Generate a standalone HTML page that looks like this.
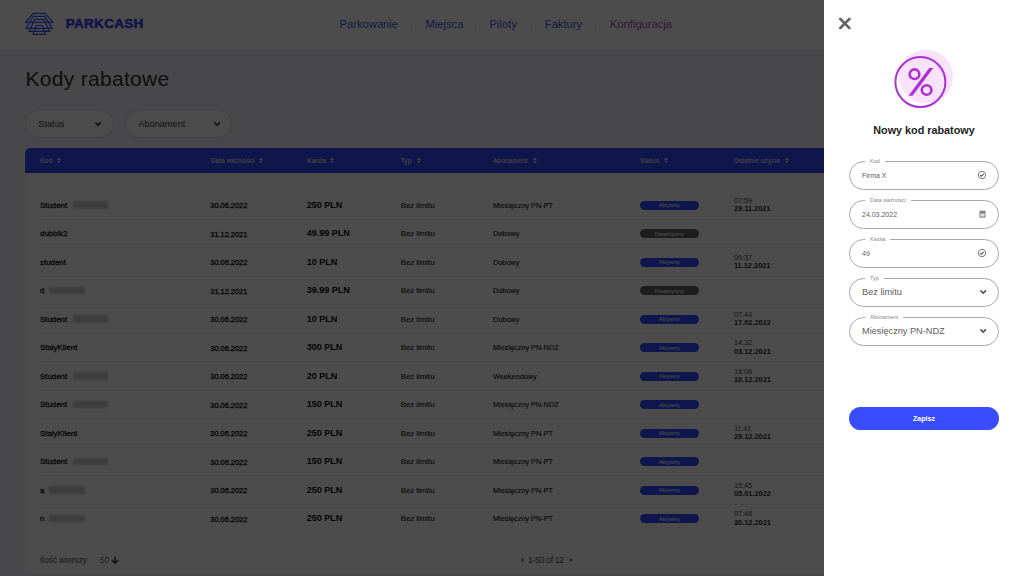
<!DOCTYPE html>
<html><head><meta charset="utf-8">
<style>
*{margin:0;padding:0;box-sizing:border-box}
html,body{width:1024px;height:576px;overflow:hidden}
body{position:relative;background:#f0eff5;font-family:"Liberation Sans",sans-serif;color:#333}
.a{position:absolute;white-space:nowrap}
.b{position:absolute}
svg{position:absolute;overflow:visible}
</style></head><body>
<div class="b" style="left:0;top:0;width:1024px;height:50px;background:#fff"></div>
<svg style="left:0;top:0" width="60" height="40" viewBox="0 0 60 40">
<g fill="none" stroke="#3a50f0" stroke-width="1.2" stroke-linejoin="miter">
<path d="M33.3 13.3 H45 L52.8 22.3 H25.6 Z"/>
<path d="M33.3 16.3 H44.7 L52.2 28.3 H26.1 Z"/>
<path d="M34.7 19.4 H43.9 L49.4 31.3 H29.2 Z"/>
<path d="M36.4 25.5 H42.2 L45.6 34.4 H33 Z"/>
</g></svg>
<div class="a" style="left:65.80px;top:17.26px;font-size:13.4px;line-height:13.4px;font-weight:bold;color:#3048f0;letter-spacing:0.35px;-webkit-text-stroke:0.55px #3048f0">PARKCASH</div>
<div class="a" style="left:339.60px;top:18.52px;font-size:11.2px;line-height:11.2px;color:#4058e8">Parkowanie</div>
<div class="a" style="left:425.50px;top:18.52px;font-size:11.2px;line-height:11.2px;color:#4058e8">Miejsca</div>
<div class="a" style="left:489.40px;top:18.52px;font-size:11.2px;line-height:11.2px;color:#4058e8">Piloty</div>
<div class="a" style="left:544.80px;top:18.52px;font-size:11.2px;line-height:11.2px;color:#4058e8">Faktury</div>
<div class="a" style="left:609.90px;top:18.52px;font-size:11.2px;line-height:11.2px;color:#b840d0">Konfiguracja</div>
<div class="b" style="left:411px;top:20px;width:1px;height:11px;background:#e4e4e4"></div>
<div class="b" style="left:475px;top:20px;width:1px;height:11px;background:#e4e4e4"></div>
<div class="b" style="left:531px;top:20px;width:1px;height:11px;background:#e4e4e4"></div>
<div class="b" style="left:595px;top:20px;width:1px;height:11px;background:#e4e4e4"></div>
<div class="a" style="left:25.50px;top:68.02px;font-size:21px;line-height:21px;color:#333;letter-spacing:0.3px">Kody rabatowe</div>
<div class="b" style="left:25px;top:109px;width:89px;height:28.6px;border-radius:14.3px;background:#fbfbfb;border:1px solid #dddddd"></div>
<div class="a" style="left:38.30px;top:119.81px;font-size:9.2px;line-height:9.2px;color:#444">Status</div>
<svg style="left:95.3px;top:121.6px" width="7" height="5" viewBox="0 0 7 5"><path d="M0.9 0.9 L3.2 3.3 L5.5 0.9" fill="none" stroke="#3a3a3a" stroke-width="1.6" stroke-linecap="round"/></svg>
<div class="b" style="left:125px;top:109px;width:107px;height:28.6px;border-radius:14.3px;background:#fbfbfb;border:1px solid #dddddd"></div>
<div class="a" style="left:138.30px;top:119.81px;font-size:9.2px;line-height:9.2px;color:#444">Abonament</div>
<svg style="left:213.60000000000002px;top:121.6px" width="7" height="5" viewBox="0 0 7 5"><path d="M0.9 0.9 L3.2 3.3 L5.5 0.9" fill="none" stroke="#3a3a3a" stroke-width="1.6" stroke-linecap="round"/></svg>
<div class="b" style="left:25px;top:148px;width:830px;height:424.7px;background:#fff;border-radius:5px"></div>
<div class="b" style="left:25px;top:148px;width:830px;height:25px;background:#2f4cff;border-radius:5px 5px 0 0"></div>
<div class="a" style="left:40.00px;top:158.07px;font-size:6.3px;line-height:6.3px;font-weight:bold;color:#d4d4dc">Kod</div>
<svg style="left:57px;top:157.3px" width="4" height="7" viewBox="0 0 4 7"><path d="M0 2.9 L1.9 0.3 L3.8 2.9 Z M0 3.7 L3.8 3.7 L1.9 6.4 Z" fill="#d4d4dc"/></svg>
<div class="a" style="left:211.00px;top:158.07px;font-size:6.3px;line-height:6.3px;font-weight:bold;color:#d4d4dc">Data ważności</div>
<svg style="left:258.6px;top:157.3px" width="4" height="7" viewBox="0 0 4 7"><path d="M0 2.9 L1.9 0.3 L3.8 2.9 Z M0 3.7 L3.8 3.7 L1.9 6.4 Z" fill="#d4d4dc"/></svg>
<div class="a" style="left:307.00px;top:158.07px;font-size:6.3px;line-height:6.3px;font-weight:bold;color:#d4d4dc">Kwota</div>
<svg style="left:330px;top:157.3px" width="4" height="7" viewBox="0 0 4 7"><path d="M0 2.9 L1.9 0.3 L3.8 2.9 Z M0 3.7 L3.8 3.7 L1.9 6.4 Z" fill="#d4d4dc"/></svg>
<div class="a" style="left:400.70px;top:158.07px;font-size:6.3px;line-height:6.3px;font-weight:bold;color:#d4d4dc">Typ</div>
<svg style="left:416.8px;top:157.3px" width="4" height="7" viewBox="0 0 4 7"><path d="M0 2.9 L1.9 0.3 L3.8 2.9 Z M0 3.7 L3.8 3.7 L1.9 6.4 Z" fill="#d4d4dc"/></svg>
<div class="a" style="left:493.00px;top:158.07px;font-size:6.3px;line-height:6.3px;font-weight:bold;color:#d4d4dc">Abonament</div>
<svg style="left:533px;top:157.3px" width="4" height="7" viewBox="0 0 4 7"><path d="M0 2.9 L1.9 0.3 L3.8 2.9 Z M0 3.7 L3.8 3.7 L1.9 6.4 Z" fill="#d4d4dc"/></svg>
<div class="a" style="left:640.00px;top:158.07px;font-size:6.3px;line-height:6.3px;font-weight:bold;color:#d4d4dc">Status</div>
<svg style="left:663.7px;top:157.3px" width="4" height="7" viewBox="0 0 4 7"><path d="M0 2.9 L1.9 0.3 L3.8 2.9 Z M0 3.7 L3.8 3.7 L1.9 6.4 Z" fill="#d4d4dc"/></svg>
<div class="a" style="left:733.70px;top:158.07px;font-size:6.3px;line-height:6.3px;font-weight:bold;color:#d4d4dc">Ostatnie użycie</div>
<svg style="left:784.7px;top:157.3px" width="4" height="7" viewBox="0 0 4 7"><path d="M0 2.9 L1.9 0.3 L3.8 2.9 Z M0 3.7 L3.8 3.7 L1.9 6.4 Z" fill="#d4d4dc"/></svg>
<div class="b" style="left:40px;top:219px;width:800px;height:1px;background:#ececec"></div>
<div class="a" style="left:40.00px;top:201.71px;font-size:7.9px;line-height:7.9px;color:#1c1c1c;-webkit-text-stroke:0.3px #1c1c1c">Student</div>
<div class="b" style="left:73px;top:201.20px;width:35px;height:7.6px;background:#cdcdcd;filter:blur(0.9px)"></div>
<div class="a" style="left:210.30px;top:202.14px;font-size:7.4px;line-height:7.4px;color:#1c1c1c;-webkit-text-stroke:0.3px #1c1c1c">30.06.2022</div>
<div class="a" style="left:306.70px;top:200.90px;font-size:9.1px;line-height:9.1px;font-weight:bold;color:#111;letter-spacing:-0.05px">250 PLN</div>
<div class="a" style="left:400.70px;top:201.50px;font-size:7.8px;line-height:7.8px;color:#1c1c1c;-webkit-text-stroke:0.12px #1c1c1c">Bez limitu</div>
<div class="a" style="left:493.00px;top:201.92px;font-size:7.3px;line-height:7.3px;color:#1c1c1c;-webkit-text-stroke:0.12px #1c1c1c">Miesięczny PN-PT</div>
<div class="b" style="left:639.7px;top:200.90px;width:59.3px;height:9px;border-radius:4.5px;background:#2f4cff"></div>
<div class="a" style="left:639.7px;width:59.3px;text-align:center;top:202.20px;font-size:5.7px;line-height:7px;color:#ffffff">Aktywny</div>
<div class="a" style="left:733.90px;top:196.81px;font-size:7.2px;line-height:7.2px;color:#4a4a4a">07:59</div>
<div class="a" style="left:733.90px;top:205.24px;font-size:7.4px;line-height:7.4px;font-weight:bold;color:#2e2e2e">29.11.2021</div>
<div class="b" style="left:40px;top:247px;width:800px;height:1px;background:#ececec"></div>
<div class="a" style="left:40.00px;top:230.21px;font-size:7.9px;line-height:7.9px;color:#1c1c1c;-webkit-text-stroke:0.3px #1c1c1c">dubbik2</div>
<div class="a" style="left:210.30px;top:230.64px;font-size:7.4px;line-height:7.4px;color:#1c1c1c;-webkit-text-stroke:0.3px #1c1c1c">31.12.2021</div>
<div class="a" style="left:306.70px;top:229.40px;font-size:9.1px;line-height:9.1px;font-weight:bold;color:#111;letter-spacing:-0.05px">49.99 PLN</div>
<div class="a" style="left:400.70px;top:230.00px;font-size:7.8px;line-height:7.8px;color:#1c1c1c;-webkit-text-stroke:0.12px #1c1c1c">Bez limitu</div>
<div class="a" style="left:493.00px;top:230.42px;font-size:7.3px;line-height:7.3px;color:#1c1c1c;-webkit-text-stroke:0.12px #1c1c1c">Dobowy</div>
<div class="b" style="left:639.7px;top:229.40px;width:59.3px;height:9px;border-radius:4.5px;background:#626262"></div>
<div class="a" style="left:639.7px;width:59.3px;text-align:center;top:230.70px;font-size:5.7px;line-height:7px;color:#ffffff">Nieaktywny</div>
<div class="b" style="left:40px;top:276px;width:800px;height:1px;background:#ececec"></div>
<div class="a" style="left:40.00px;top:258.71px;font-size:7.9px;line-height:7.9px;color:#1c1c1c;-webkit-text-stroke:0.3px #1c1c1c">student</div>
<div class="a" style="left:210.30px;top:259.14px;font-size:7.4px;line-height:7.4px;color:#1c1c1c;-webkit-text-stroke:0.3px #1c1c1c">30.06.2022</div>
<div class="a" style="left:306.70px;top:257.90px;font-size:9.1px;line-height:9.1px;font-weight:bold;color:#111;letter-spacing:-0.05px">10 PLN</div>
<div class="a" style="left:400.70px;top:258.50px;font-size:7.8px;line-height:7.8px;color:#1c1c1c;-webkit-text-stroke:0.12px #1c1c1c">Bez limitu</div>
<div class="a" style="left:493.00px;top:258.92px;font-size:7.3px;line-height:7.3px;color:#1c1c1c;-webkit-text-stroke:0.12px #1c1c1c">Dobowy</div>
<div class="b" style="left:639.7px;top:257.90px;width:59.3px;height:9px;border-radius:4.5px;background:#2f4cff"></div>
<div class="a" style="left:639.7px;width:59.3px;text-align:center;top:259.20px;font-size:5.7px;line-height:7px;color:#ffffff">Aktywny</div>
<div class="a" style="left:733.90px;top:253.81px;font-size:7.2px;line-height:7.2px;color:#4a4a4a">09:37</div>
<div class="a" style="left:733.90px;top:262.24px;font-size:7.4px;line-height:7.4px;font-weight:bold;color:#2e2e2e">11.12.2021</div>
<div class="b" style="left:40px;top:304px;width:800px;height:1px;background:#ececec"></div>
<div class="a" style="left:40.00px;top:287.21px;font-size:7.9px;line-height:7.9px;color:#1c1c1c;-webkit-text-stroke:0.3px #1c1c1c">d</div>
<div class="b" style="left:49px;top:286.70px;width:35.5px;height:7.6px;background:#cdcdcd;filter:blur(0.9px)"></div>
<div class="a" style="left:210.30px;top:287.64px;font-size:7.4px;line-height:7.4px;color:#1c1c1c;-webkit-text-stroke:0.3px #1c1c1c">31.12.2021</div>
<div class="a" style="left:306.70px;top:286.40px;font-size:9.1px;line-height:9.1px;font-weight:bold;color:#111;letter-spacing:-0.05px">39.99 PLN</div>
<div class="a" style="left:400.70px;top:287.00px;font-size:7.8px;line-height:7.8px;color:#1c1c1c;-webkit-text-stroke:0.12px #1c1c1c">Bez limitu</div>
<div class="a" style="left:493.00px;top:287.42px;font-size:7.3px;line-height:7.3px;color:#1c1c1c;-webkit-text-stroke:0.12px #1c1c1c">Dobowy</div>
<div class="b" style="left:639.7px;top:286.40px;width:59.3px;height:9px;border-radius:4.5px;background:#626262"></div>
<div class="a" style="left:639.7px;width:59.3px;text-align:center;top:287.70px;font-size:5.7px;line-height:7px;color:#ffffff">Nieaktywny</div>
<div class="b" style="left:40px;top:333px;width:800px;height:1px;background:#ececec"></div>
<div class="a" style="left:40.00px;top:315.71px;font-size:7.9px;line-height:7.9px;color:#1c1c1c;-webkit-text-stroke:0.3px #1c1c1c">Student</div>
<div class="b" style="left:73px;top:315.20px;width:35px;height:7.6px;background:#cdcdcd;filter:blur(0.9px)"></div>
<div class="a" style="left:210.30px;top:316.14px;font-size:7.4px;line-height:7.4px;color:#1c1c1c;-webkit-text-stroke:0.3px #1c1c1c">30.06.2022</div>
<div class="a" style="left:306.70px;top:314.90px;font-size:9.1px;line-height:9.1px;font-weight:bold;color:#111;letter-spacing:-0.05px">10 PLN</div>
<div class="a" style="left:400.70px;top:315.50px;font-size:7.8px;line-height:7.8px;color:#1c1c1c;-webkit-text-stroke:0.12px #1c1c1c">Bez limitu</div>
<div class="a" style="left:493.00px;top:315.92px;font-size:7.3px;line-height:7.3px;color:#1c1c1c;-webkit-text-stroke:0.12px #1c1c1c">Dobowy</div>
<div class="b" style="left:639.7px;top:314.90px;width:59.3px;height:9px;border-radius:4.5px;background:#2f4cff"></div>
<div class="a" style="left:639.7px;width:59.3px;text-align:center;top:316.20px;font-size:5.7px;line-height:7px;color:#ffffff">Aktywny</div>
<div class="a" style="left:733.90px;top:310.81px;font-size:7.2px;line-height:7.2px;color:#4a4a4a">07:44</div>
<div class="a" style="left:733.90px;top:319.24px;font-size:7.4px;line-height:7.4px;font-weight:bold;color:#2e2e2e">17.02.2022</div>
<div class="b" style="left:40px;top:361px;width:800px;height:1px;background:#ececec"></div>
<div class="a" style="left:40.00px;top:344.21px;font-size:7.9px;line-height:7.9px;color:#1c1c1c;-webkit-text-stroke:0.3px #1c1c1c">StalyKlient</div>
<div class="a" style="left:210.30px;top:344.64px;font-size:7.4px;line-height:7.4px;color:#1c1c1c;-webkit-text-stroke:0.3px #1c1c1c">30.06.2022</div>
<div class="a" style="left:306.70px;top:343.40px;font-size:9.1px;line-height:9.1px;font-weight:bold;color:#111;letter-spacing:-0.05px">300 PLN</div>
<div class="a" style="left:400.70px;top:344.00px;font-size:7.8px;line-height:7.8px;color:#1c1c1c;-webkit-text-stroke:0.12px #1c1c1c">Bez limitu</div>
<div class="a" style="left:493.00px;top:344.42px;font-size:7.3px;line-height:7.3px;color:#1c1c1c;-webkit-text-stroke:0.12px #1c1c1c">Miesięczny PN-NDZ</div>
<div class="b" style="left:639.7px;top:343.40px;width:59.3px;height:9px;border-radius:4.5px;background:#2f4cff"></div>
<div class="a" style="left:639.7px;width:59.3px;text-align:center;top:344.70px;font-size:5.7px;line-height:7px;color:#ffffff">Aktywny</div>
<div class="a" style="left:733.90px;top:339.31px;font-size:7.2px;line-height:7.2px;color:#4a4a4a">14:32</div>
<div class="a" style="left:733.90px;top:347.74px;font-size:7.4px;line-height:7.4px;font-weight:bold;color:#2e2e2e">03.12.2021</div>
<div class="b" style="left:40px;top:390px;width:800px;height:1px;background:#ececec"></div>
<div class="a" style="left:40.00px;top:372.71px;font-size:7.9px;line-height:7.9px;color:#1c1c1c;-webkit-text-stroke:0.3px #1c1c1c">Student</div>
<div class="b" style="left:73px;top:372.20px;width:35px;height:7.6px;background:#cdcdcd;filter:blur(0.9px)"></div>
<div class="a" style="left:210.30px;top:373.14px;font-size:7.4px;line-height:7.4px;color:#1c1c1c;-webkit-text-stroke:0.3px #1c1c1c">30.06.2022</div>
<div class="a" style="left:306.70px;top:371.90px;font-size:9.1px;line-height:9.1px;font-weight:bold;color:#111;letter-spacing:-0.05px">20 PLN</div>
<div class="a" style="left:400.70px;top:372.50px;font-size:7.8px;line-height:7.8px;color:#1c1c1c;-webkit-text-stroke:0.12px #1c1c1c">Bez limitu</div>
<div class="a" style="left:493.00px;top:372.92px;font-size:7.3px;line-height:7.3px;color:#1c1c1c;-webkit-text-stroke:0.12px #1c1c1c">Weekendowy</div>
<div class="b" style="left:639.7px;top:371.90px;width:59.3px;height:9px;border-radius:4.5px;background:#2f4cff"></div>
<div class="a" style="left:639.7px;width:59.3px;text-align:center;top:373.20px;font-size:5.7px;line-height:7px;color:#ffffff">Aktywny</div>
<div class="a" style="left:733.90px;top:367.81px;font-size:7.2px;line-height:7.2px;color:#4a4a4a">18:08</div>
<div class="a" style="left:733.90px;top:376.24px;font-size:7.4px;line-height:7.4px;font-weight:bold;color:#2e2e2e">10.12.2021</div>
<div class="b" style="left:40px;top:418px;width:800px;height:1px;background:#ececec"></div>
<div class="a" style="left:40.00px;top:401.21px;font-size:7.9px;line-height:7.9px;color:#1c1c1c;-webkit-text-stroke:0.3px #1c1c1c">Student</div>
<div class="b" style="left:73px;top:400.70px;width:35px;height:7.6px;background:#cdcdcd;filter:blur(0.9px)"></div>
<div class="a" style="left:210.30px;top:401.64px;font-size:7.4px;line-height:7.4px;color:#1c1c1c;-webkit-text-stroke:0.3px #1c1c1c">30.06.2022</div>
<div class="a" style="left:306.70px;top:400.40px;font-size:9.1px;line-height:9.1px;font-weight:bold;color:#111;letter-spacing:-0.05px">150 PLN</div>
<div class="a" style="left:400.70px;top:401.00px;font-size:7.8px;line-height:7.8px;color:#1c1c1c;-webkit-text-stroke:0.12px #1c1c1c">Bez limitu</div>
<div class="a" style="left:493.00px;top:401.42px;font-size:7.3px;line-height:7.3px;color:#1c1c1c;-webkit-text-stroke:0.12px #1c1c1c">Miesięczny PN-NDZ</div>
<div class="b" style="left:639.7px;top:400.40px;width:59.3px;height:9px;border-radius:4.5px;background:#2f4cff"></div>
<div class="a" style="left:639.7px;width:59.3px;text-align:center;top:401.70px;font-size:5.7px;line-height:7px;color:#ffffff">Aktywny</div>
<div class="b" style="left:40px;top:447px;width:800px;height:1px;background:#ececec"></div>
<div class="a" style="left:40.00px;top:429.71px;font-size:7.9px;line-height:7.9px;color:#1c1c1c;-webkit-text-stroke:0.3px #1c1c1c">StalyKlient</div>
<div class="a" style="left:210.30px;top:430.14px;font-size:7.4px;line-height:7.4px;color:#1c1c1c;-webkit-text-stroke:0.3px #1c1c1c">30.06.2022</div>
<div class="a" style="left:306.70px;top:428.90px;font-size:9.1px;line-height:9.1px;font-weight:bold;color:#111;letter-spacing:-0.05px">250 PLN</div>
<div class="a" style="left:400.70px;top:429.50px;font-size:7.8px;line-height:7.8px;color:#1c1c1c;-webkit-text-stroke:0.12px #1c1c1c">Bez limitu</div>
<div class="a" style="left:493.00px;top:429.92px;font-size:7.3px;line-height:7.3px;color:#1c1c1c;-webkit-text-stroke:0.12px #1c1c1c">Miesięczny PN-PT</div>
<div class="b" style="left:639.7px;top:428.90px;width:59.3px;height:9px;border-radius:4.5px;background:#2f4cff"></div>
<div class="a" style="left:639.7px;width:59.3px;text-align:center;top:430.20px;font-size:5.7px;line-height:7px;color:#ffffff">Aktywny</div>
<div class="a" style="left:733.90px;top:424.81px;font-size:7.2px;line-height:7.2px;color:#4a4a4a">11:41</div>
<div class="a" style="left:733.90px;top:433.24px;font-size:7.4px;line-height:7.4px;font-weight:bold;color:#2e2e2e">29.12.2021</div>
<div class="b" style="left:40px;top:475px;width:800px;height:1px;background:#ececec"></div>
<div class="a" style="left:40.00px;top:458.21px;font-size:7.9px;line-height:7.9px;color:#1c1c1c;-webkit-text-stroke:0.3px #1c1c1c">Student</div>
<div class="b" style="left:73px;top:457.70px;width:35px;height:7.6px;background:#cdcdcd;filter:blur(0.9px)"></div>
<div class="a" style="left:210.30px;top:458.64px;font-size:7.4px;line-height:7.4px;color:#1c1c1c;-webkit-text-stroke:0.3px #1c1c1c">30.06.2022</div>
<div class="a" style="left:306.70px;top:457.40px;font-size:9.1px;line-height:9.1px;font-weight:bold;color:#111;letter-spacing:-0.05px">150 PLN</div>
<div class="a" style="left:400.70px;top:458.00px;font-size:7.8px;line-height:7.8px;color:#1c1c1c;-webkit-text-stroke:0.12px #1c1c1c">Bez limitu</div>
<div class="a" style="left:493.00px;top:458.42px;font-size:7.3px;line-height:7.3px;color:#1c1c1c;-webkit-text-stroke:0.12px #1c1c1c">Miesięczny PN-PT</div>
<div class="b" style="left:639.7px;top:457.40px;width:59.3px;height:9px;border-radius:4.5px;background:#2f4cff"></div>
<div class="a" style="left:639.7px;width:59.3px;text-align:center;top:458.70px;font-size:5.7px;line-height:7px;color:#ffffff">Aktywny</div>
<div class="b" style="left:40px;top:504px;width:800px;height:1px;background:#ececec"></div>
<div class="a" style="left:40.00px;top:486.71px;font-size:7.9px;line-height:7.9px;color:#1c1c1c;-webkit-text-stroke:0.3px #1c1c1c">a</div>
<div class="b" style="left:49px;top:486.20px;width:35.5px;height:7.6px;background:#cdcdcd;filter:blur(0.9px)"></div>
<div class="a" style="left:210.30px;top:487.14px;font-size:7.4px;line-height:7.4px;color:#1c1c1c;-webkit-text-stroke:0.3px #1c1c1c">30.06.2022</div>
<div class="a" style="left:306.70px;top:485.90px;font-size:9.1px;line-height:9.1px;font-weight:bold;color:#111;letter-spacing:-0.05px">250 PLN</div>
<div class="a" style="left:400.70px;top:486.50px;font-size:7.8px;line-height:7.8px;color:#1c1c1c;-webkit-text-stroke:0.12px #1c1c1c">Bez limitu</div>
<div class="a" style="left:493.00px;top:486.92px;font-size:7.3px;line-height:7.3px;color:#1c1c1c;-webkit-text-stroke:0.12px #1c1c1c">Miesięczny PN-PT</div>
<div class="b" style="left:639.7px;top:485.90px;width:59.3px;height:9px;border-radius:4.5px;background:#2f4cff"></div>
<div class="a" style="left:639.7px;width:59.3px;text-align:center;top:487.20px;font-size:5.7px;line-height:7px;color:#ffffff">Aktywny</div>
<div class="a" style="left:733.90px;top:481.81px;font-size:7.2px;line-height:7.2px;color:#4a4a4a">15:45</div>
<div class="a" style="left:733.90px;top:490.24px;font-size:7.4px;line-height:7.4px;font-weight:bold;color:#2e2e2e">05.01.2022</div>
<div class="a" style="left:40.00px;top:515.21px;font-size:7.9px;line-height:7.9px;color:#1c1c1c;-webkit-text-stroke:0.3px #1c1c1c">n</div>
<div class="b" style="left:49px;top:514.70px;width:35.5px;height:7.6px;background:#cdcdcd;filter:blur(0.9px)"></div>
<div class="a" style="left:210.30px;top:515.64px;font-size:7.4px;line-height:7.4px;color:#1c1c1c;-webkit-text-stroke:0.3px #1c1c1c">30.06.2022</div>
<div class="a" style="left:306.70px;top:514.40px;font-size:9.1px;line-height:9.1px;font-weight:bold;color:#111;letter-spacing:-0.05px">250 PLN</div>
<div class="a" style="left:400.70px;top:515.00px;font-size:7.8px;line-height:7.8px;color:#1c1c1c;-webkit-text-stroke:0.12px #1c1c1c">Bez limitu</div>
<div class="a" style="left:493.00px;top:515.42px;font-size:7.3px;line-height:7.3px;color:#1c1c1c;-webkit-text-stroke:0.12px #1c1c1c">Miesięczny PN-PT</div>
<div class="b" style="left:639.7px;top:514.40px;width:59.3px;height:9px;border-radius:4.5px;background:#2f4cff"></div>
<div class="a" style="left:639.7px;width:59.3px;text-align:center;top:515.70px;font-size:5.7px;line-height:7px;color:#ffffff">Aktywny</div>
<div class="a" style="left:733.90px;top:510.31px;font-size:7.2px;line-height:7.2px;color:#4a4a4a">07:48</div>
<div class="a" style="left:733.90px;top:518.74px;font-size:7.4px;line-height:7.4px;font-weight:bold;color:#2e2e2e">30.12.2021</div>
<div class="a" style="left:40.00px;top:555.97px;font-size:8.3px;line-height:8.3px;color:#707070;-webkit-text-stroke:0.15px #707070">Ilość wierszy</div>
<div class="a" style="left:100.00px;top:555.97px;font-size:8.3px;line-height:8.3px;color:#777">50</div>
<svg style="left:111px;top:555.8px" width="8" height="8" viewBox="0 0 8 8"><path d="M4 0.6 V7.2 M0.8 4 L4 7.2 L7.2 4" fill="none" stroke="#333" stroke-width="1.35"/></svg>
<div class="a" style="left:527.80px;top:555.85px;font-size:8.8px;line-height:8.8px;color:#555;letter-spacing:-0.35px">1-50 of 12</div>
<svg style="left:520px;top:557px" width="4" height="6" viewBox="0 0 4 6"><path d="M3.5 0.5 L0.3 3 L3.5 5.5 Z" fill="#888"/></svg>
<svg style="left:569px;top:557px" width="4" height="6" viewBox="0 0 4 6"><path d="M0.5 0.5 L3.7 3 L0.5 5.5 Z" fill="#888"/></svg>
<div class="b" style="left:0;top:0;width:1024px;height:576px;background:rgba(0,0,0,0.7)"></div>
<div class="b" style="left:824px;top:0;width:200px;height:576px;background:#fff"></div>
<svg style="left:830px;top:8px" width="30" height="30" viewBox="830 8 30 30"><path d="M840.25 18.9 L849.45 28.1 M849.45 18.9 L840.25 28.1" stroke="#636363" stroke-width="2.7" stroke-linecap="round" fill="none"/></svg>
<svg style="left:880px;top:40px" width="80" height="80" viewBox="880 40 80 80">
<circle cx="926" cy="76.6" r="27" fill="#f8e2fc"/>
<circle cx="920.4" cy="82.1" r="25" fill="none" stroke="#b02fd0" stroke-width="2"/>
<circle cx="914.5" cy="74.2" r="4.8" fill="none" stroke="#b02fd0" stroke-width="2.6"/>
<circle cx="926.6" cy="90" r="4.8" fill="none" stroke="#b02fd0" stroke-width="2.6"/>
<path d="M929.2 67.9 L933.3 67.9 L912.6 95.7 L908.5 95.7 Z" fill="#b02fd0"/>
</svg>
<div class="a" style="left:824px;width:200px;text-align:center;top:124.61px;font-size:10.8px;line-height:10.8px;font-weight:bold;color:#222">Nowy kod rabatowy</div>
<div class="b" style="left:849px;top:161px;width:150px;height:29px;border-radius:14.5px;border:1px solid #a8a8a8"></div>
<div class="a" style="left:870.00px;top:158.54px;font-size:5.5px;line-height:5.5px;color:#888;background:#fff;padding:0 5px;margin-left:-5px;line-height:5.5px">Kod</div>
<div class="a" style="left:862.00px;top:172.07px;font-size:7px;line-height:7px;color:#606060">Firma X</div>
<svg style="left:977px;top:170px" width="10" height="10" viewBox="0 0 10 10"><circle cx="5" cy="5" r="3.7" fill="none" stroke="#6a6a6a" stroke-width="0.9"/><path d="M3.2 5.1 L4.4 6.2 L6.8 3.8" fill="none" stroke="#555" stroke-width="1.15"/></svg>
<div class="b" style="left:849px;top:200px;width:150px;height:29px;border-radius:14.5px;border:1px solid #a8a8a8"></div>
<div class="a" style="left:870.00px;top:197.54px;font-size:5.5px;line-height:5.5px;color:#888;background:#fff;padding:0 5px;margin-left:-5px;line-height:5.5px">Data ważności</div>
<div class="a" style="left:862.00px;top:211.07px;font-size:7px;line-height:7px;color:#606060">24.03.2022</div>
<svg style="left:979px;top:210px" width="7" height="8" viewBox="0 0 7 8"><path d="M0.5 1.2 H6.5 V7.6 H0.5 Z" fill="#777"/><rect x="1.3" y="3.4" width="4.4" height="3.2" fill="#ddd"/><rect x="1.5" y="0.2" width="1" height="1.4" fill="#777"/><rect x="4.5" y="0.2" width="1" height="1.4" fill="#777"/></svg>
<div class="b" style="left:849px;top:239px;width:150px;height:29px;border-radius:14.5px;border:1px solid #a8a8a8"></div>
<div class="a" style="left:870.00px;top:236.54px;font-size:5.5px;line-height:5.5px;color:#888;background:#fff;padding:0 5px;margin-left:-5px;line-height:5.5px">Kwota</div>
<div class="a" style="left:862.00px;top:250.07px;font-size:7px;line-height:7px;color:#606060">49</div>
<svg style="left:977px;top:248px" width="10" height="10" viewBox="0 0 10 10"><circle cx="5" cy="5" r="3.7" fill="none" stroke="#6a6a6a" stroke-width="0.9"/><path d="M3.2 5.1 L4.4 6.2 L6.8 3.8" fill="none" stroke="#555" stroke-width="1.15"/></svg>
<div class="b" style="left:849px;top:278px;width:150px;height:29px;border-radius:14.5px;border:1px solid #a8a8a8"></div>
<div class="a" style="left:870.00px;top:275.54px;font-size:5.5px;line-height:5.5px;color:#888;background:#fff;padding:0 5px;margin-left:-5px;line-height:5.5px">Typ</div>
<div class="a" style="left:862.00px;top:287.71px;font-size:9.2px;line-height:9.2px;color:#606060">Bez limitu</div>
<svg style="left:979.9px;top:290.0px" width="7" height="5" viewBox="0 0 7 5"><path d="M0.9 0.9 L3.2 3.2 L5.5 0.9" fill="none" stroke="#505050" stroke-width="1.6" stroke-linecap="round"/></svg>
<div class="b" style="left:849px;top:317px;width:150px;height:29px;border-radius:14.5px;border:1px solid #a8a8a8"></div>
<div class="a" style="left:870.00px;top:314.54px;font-size:5.5px;line-height:5.5px;color:#888;background:#fff;padding:0 5px;margin-left:-5px;line-height:5.5px">Abonament</div>
<div class="a" style="left:862.00px;top:326.71px;font-size:9.2px;line-height:9.2px;color:#606060">Miesięczny PN-NDZ</div>
<svg style="left:979.9px;top:329.0px" width="7" height="5" viewBox="0 0 7 5"><path d="M0.9 0.9 L3.2 3.2 L5.5 0.9" fill="none" stroke="#505050" stroke-width="1.6" stroke-linecap="round"/></svg>
<div class="b" style="left:849px;top:406.5px;width:150px;height:23.7px;border-radius:12px;background:#394dff"></div>
<div class="a" style="left:849px;width:150px;text-align:center;top:414.57px;font-size:7px;line-height:7px;font-weight:bold;color:#fff">Zapisz</div>
</body></html>
